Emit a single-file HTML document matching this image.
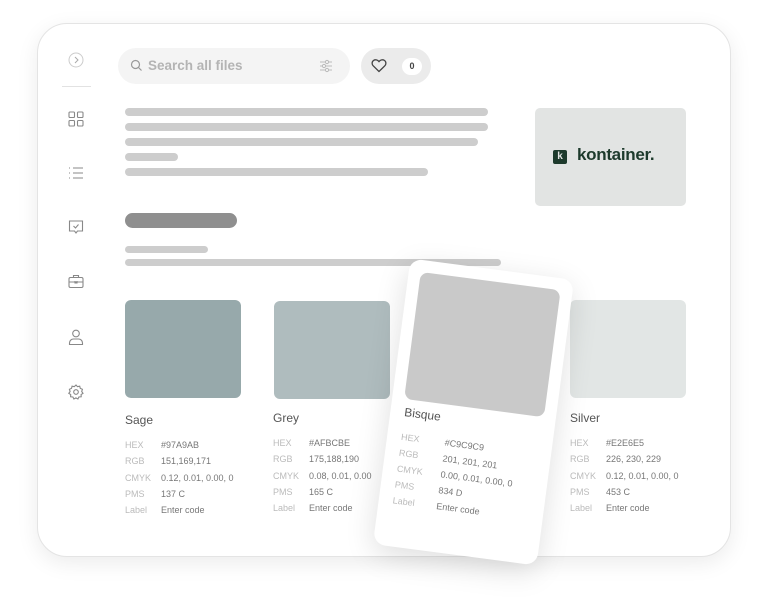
<!DOCTYPE html>
<html><head><meta charset="utf-8"><style>
*{margin:0;padding:0;box-sizing:border-box}
body{width:768px;height:599px;background:#fff;font-family:"Liberation Sans",sans-serif;position:relative;overflow:hidden}
.frame{position:absolute;left:37px;top:23px;width:694px;height:534px;border-radius:30px;background:#fff;border:1px solid #e4e4e4;box-shadow:0 6px 22px rgba(0,0,0,.08)}
.a{position:absolute}
.bar{position:absolute;height:8px;border-radius:4px;background:#cdcdcd}
.ic{position:absolute;left:67px;width:18px;height:18px}
.sw{position:absolute;width:116px;height:98px;border-radius:6px}
.name{position:absolute;font-size:12px;color:#555}
.tbl{position:absolute;font-size:9px;line-height:16.3px;color:#777}
.tbl span{display:inline-block;width:36px;color:#bbb}
</style></head><body>
<div class="frame"></div>
<svg class="ic" style="top:51px" viewBox="0 0 18 18"><circle cx="9" cy="9" r="7" fill="none" stroke="#ccc" stroke-width="1"/><path d="M8 6l3 3-3 3" fill="none" stroke="#aaa"/></svg>
<div class="a" style="left:62px;top:86px;width:29px;height:1px;background:#e2e2e2"></div>
<svg class="ic" style="top:110px" viewBox="0 0 18 18" fill="none" stroke="#888" stroke-width="1.1"><rect x="2" y="2" width="5.5" height="5.5" rx="1"/><rect x="10.5" y="2" width="5.5" height="5.5" rx="1"/><rect x="2" y="10.5" width="5.5" height="5.5" rx="1"/><rect x="10.5" y="10.5" width="5.5" height="5.5" rx="1"/></svg>
<svg class="ic" style="top:164px" viewBox="0 0 18 18" fill="none" stroke="#888" stroke-width="1.1"><path d="M6 4h10M6 9h10M6 14h10M2 4h1M2 9h1M2 14h1"/></svg>
<svg class="ic" style="top:218px" viewBox="0 0 18 18" fill="none" stroke="#888" stroke-width="1.1"><path d="M2.5 3h13v10h-5l-1.5 2-1.5-2h-5z"/><path d="M6.5 8l2 2 3-3.5"/></svg>
<svg class="ic" style="top:272px" viewBox="0 0 18 18" fill="none" stroke="#888" stroke-width="1.1"><rect x="2" y="5.5" width="14" height="10" rx="1.5"/><path d="M6.5 5.5V3.5h5v2M2 10h14M8 9v2h2V9"/></svg>
<svg class="ic" style="top:328px" viewBox="0 0 18 18" fill="none" stroke="#888" stroke-width="1.1"><circle cx="9" cy="5.5" r="3.3"/><path d="M2.5 16.5v-1.5c0-2.5 2-4 4-4h5c2 0 4 1.5 4 4v1.5z"/></svg>
<svg class="ic" style="top:383px" viewBox="0 0 18 18" fill="none" stroke="#888" stroke-width="1.1"><circle cx="9" cy="9" r="2.3"/><path d="M9 2l1.5 1.7 2.2-.5.6 2.2 2.1.9-.7 2.2 1.3 1.8-1.9 1.2.1 2.3-2.3.2-1 2-2-1.1-2 1.1-1-2-2.3-.2.1-2.3-1.9-1.2 1.3-1.8-.7-2.2 2.1-.9.6-2.2 2.2.5z"/></svg>
<div class="a" style="left:118px;top:48px;width:232px;height:36px;border-radius:18px;background:#f4f4f4"></div>
<svg class="a" style="left:130px;top:59px" width="13" height="13" viewBox="0 0 13 13" fill="none" stroke="#999" stroke-width="1.2"><circle cx="5.5" cy="5.5" r="4"/><path d="M8.5 8.5l3 3"/></svg>
<div class="a" style="left:148px;top:58px;font-size:13.5px;font-weight:bold;color:#b4b4b4">Search all files</div>
<svg class="a" style="left:318px;top:58px" width="16" height="16" viewBox="0 0 16 16" fill="none" stroke="#bbb" stroke-width="1"><path d="M2 4h12M2 8h12M2 12h12"/><circle cx="9" cy="4" r="1.6" fill="#f4f4f4"/><circle cx="6" cy="8" r="1.6" fill="#f4f4f4"/><circle cx="9" cy="12" r="1.6" fill="#f4f4f4"/></svg>
<div class="a" style="left:361px;top:48px;width:70px;height:36px;border-radius:18px;background:#ebebeb"></div>
<svg class="a" style="left:371px;top:58px" width="16" height="15" viewBox="0 0 16 15" fill="none" stroke="#444" stroke-width="1.3"><path d="M8 13.5L2.2 7.8C.6 6.2.8 3.6 2.6 2.4 4.2 1.3 6.5 1.8 8 3.6 9.5 1.8 11.8 1.3 13.4 2.4c1.8 1.2 2 3.8.4 5.4z"/></svg>
<div class="a" style="left:402px;top:58px;width:20px;height:17px;border-radius:9px;background:#fff;font-size:9px;font-weight:bold;color:#444;text-align:center;line-height:17px">0</div>
<div class="bar" style="left:125px;top:108px;width:363px"></div>
<div class="bar" style="left:125px;top:123px;width:363px"></div>
<div class="bar" style="left:125px;top:138px;width:353px"></div>
<div class="bar" style="left:125px;top:153px;width:53px"></div>
<div class="bar" style="left:125px;top:168px;width:303px"></div>
<div class="a" style="left:125px;top:213px;width:112px;height:15px;border-radius:8px;background:#8f8f8f"></div>
<div class="bar" style="left:125px;top:246px;width:83px;height:7px"></div>
<div class="bar" style="left:125px;top:259px;width:376px;height:7px"></div>
<div class="a" style="left:535px;top:108px;width:151px;height:98px;border-radius:5px;background:#e2e4e3"></div>
<div class="a" style="left:553px;top:150px;width:14px;height:14px;background:#1d3a2c;border-radius:2px;color:#e2e4e3;font-size:10px;font-weight:bold;text-align:center;line-height:14px">k</div>
<div class="a" style="left:577px;top:145px;font-size:17px;font-weight:bold;color:#1d3a2c;letter-spacing:-.3px">kontainer.</div>
<div class="sw" style="left:125px;top:300px;background:#97a9ab"></div>
<div class="name" style="left:125px;top:413px">Sage</div>
<div class="tbl" style="left:125px;top:437px"><span>HEX</span>#97A9AB<br><span>RGB</span>151,169,171<br><span>CMYK</span>0.12, 0.01, 0.00, 0<br><span>PMS</span>137 C<br><span>Label</span>Enter code</div>
<div class="sw" style="left:274px;top:301px;background:#afbcbe"></div>
<div class="name" style="left:273px;top:411px">Grey</div>
<div class="tbl" style="left:273px;top:435px"><span>HEX</span>#AFBCBE<br><span>RGB</span>175,188,190<br><span>CMYK</span>0.08, 0.01, 0.00<br><span>PMS</span>165 C<br><span>Label</span>Enter code</div>
<div class="sw" style="left:570px;top:300px;background:#e2e6e5"></div>
<div class="name" style="left:570px;top:411px">Silver</div>
<div class="tbl" style="left:570px;top:435px"><span>HEX</span>#E2E6E5<br><span>RGB</span>226, 230, 229<br><span>CMYK</span>0.12, 0.01, 0.00, 0<br><span>PMS</span>453 C<br><span>Label</span>Enter code</div>
<div class="a" style="left:391px;top:268px;width:165px;height:288px;border-radius:12px;background:#fff;box-shadow:0 8px 30px rgba(0,0,0,.13);transform:rotate(7.5deg)">
<div class="a" style="left:12px;top:12px;width:141px;height:128px;border-radius:8px;background:#c9c9c9"></div>
<div class="name" style="left:14px;top:146px">Bisque</div>
<div class="tbl" style="left:14px;top:170px;line-height:16px"><span style="width:44px">HEX</span>#C9C9C9<br><span style="width:44px">RGB</span>201, 201, 201<br><span style="width:44px">CMYK</span>0.00, 0.01, 0.00, 0<br><span style="width:44px">PMS</span>834 D<br><span style="width:44px">Label</span>Enter code</div>
</div>
</body></html>
